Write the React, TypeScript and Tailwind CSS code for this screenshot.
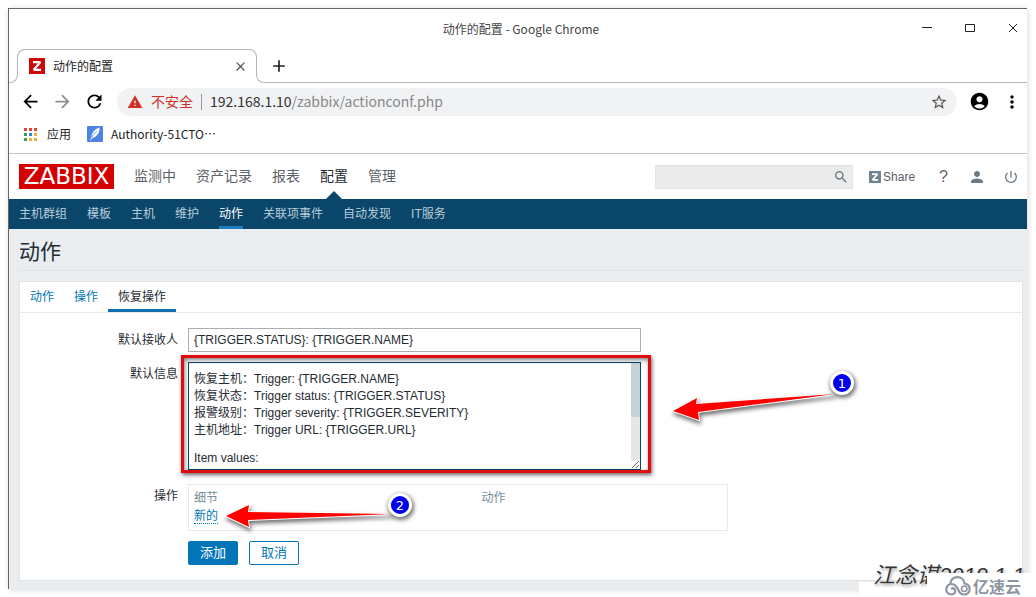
import React, { useState } from 'react';
import {
  MdArrowBack,
  MdArrowForward,
  MdRefresh,
  MdWarning,
  MdStarBorder,
  MdAccountCircle,
  MdMoreVert,
  MdClose,
  MdAdd,
  MdSearch,
  MdPerson,
  MdPowerSettingsNew,
} from 'react-icons/md';

const mainMenu = ['监测中', '资产记录', '报表', '配置', '管理'];
const subMenu = [
  '主机群组',
  '模板',
  '主机',
  '维护',
  '动作',
  '关联项事件',
  '自动发现',
  'IT服务',
];
const tabs = ['动作', '操作', '恢复操作'];

const defaultMessage = `恢复主机：Trigger: {TRIGGER.NAME}
恢复状态：Trigger status: {TRIGGER.STATUS}
报警级别：Trigger severity: {TRIGGER.SEVERITY}
主机地址：Trigger URL: {TRIGGER.URL}

Item values:





`;

const appColors = [
  'bg-[#d9453a]',
  'bg-[#d9453a]',
  'bg-[#d9453a]',
  'bg-[#2f9e58]',
  'bg-[#3b7de0]',
  'bg-[#e8b53a]',
  'bg-[#2f9e58]',
  'bg-[#e8b53a]',
  'bg-[#e8b53a]',
];

function ZIcon({ className, size }: { className: string; size: number }) {
  return (
    <svg width={size} height={size} viewBox="0 0 16 16" className={className}>
      <rect width="16" height="16" fill="currentColor" />
      <path
        d="M4 4.200h7.200L4.800 11.800H12"
        fill="none"
        stroke="#fff"
        strokeWidth="2.200"
        strokeLinejoin="bevel"
      />
    </svg>
  );
}

function TitleBar() {
  return (
    <div className="relative flex h-10 items-center justify-center pl-1.5 text-[12px] text-[#444]">
      <span>动作的配置 - Google Chrome</span>
      <div className="absolute right-2 top-3 flex gap-8 text-[#222]">
        <button aria-label="Minimize">
          <svg width="11" height="14" viewBox="0 0 11 14">
            <path d="M0 6.500h10" stroke="currentColor" />
          </svg>
        </button>
        <button aria-label="Maximize">
          <svg width="11" height="14" viewBox="0 0 11 14">
            <path d="M.5 3.500h9v7h-9z" fill="none" stroke="currentColor" />
          </svg>
        </button>
        <button aria-label="Close">
          <svg width="11" height="14" viewBox="0 0 11 14">
            <path d="M1 3l8 8M9 3l-8 8" stroke="currentColor" />
          </svg>
        </button>
      </div>
    </div>
  );
}

function TabStrip() {
  return (
    <div className="flex h-[34px]">
      <div className="h-2 w-[9px] self-end rounded-br-lg border-b border-r border-[#b4b5b7]" />
      <div className="-ml-px h-[26px] w-60 rounded-t-lg border-x border-t border-[#b4b5b7] pl-[11px] pr-2">
        <div className="flex h-8 items-center text-[12px] text-[#222]">
          <ZIcon size={16} className="mr-2 text-[#cc0a0a]" />
          <span className="flex-1">动作的配置</span>
          <button aria-label="Close tab">
            <MdClose className="h-[15px] w-[15px] text-[#555]" />
          </button>
        </div>
      </div>
      <div className="-ml-px h-2 w-2 self-end rounded-bl-lg border-b border-l border-[#b4b5b7]" />
      <div className="flex flex-1 items-center border-b border-[#b4b5b7] pl-[5px]">
        <button aria-label="New tab">
          <MdAdd className="h-5 w-5 text-[#222]" />
        </button>
      </div>
    </div>
  );
}

function Toolbar() {
  return (
    <div className="flex h-[37px] items-center pl-[11px] pr-[5px]">
      <div className="flex gap-[11px]">
        <button aria-label="Back">
          <MdArrowBack className="h-[21px] w-[21px] text-black" />
        </button>
        <button aria-label="Forward">
          <MdArrowForward className="h-[21px] w-[21px] text-[#8f8f8f]" />
        </button>
        <button aria-label="Reload">
          <MdRefresh className="h-[21px] w-[21px] text-black" />
        </button>
      </div>
      <div className="ml-3 flex h-7 flex-1 items-center rounded-full bg-[#f1f2f4] pl-2.5 pr-[9px] text-[14px]">
        <MdWarning className="h-4 w-4 text-[#d03027]" />
        <span className="ml-2 text-[#d03027]">不安全</span>
        <span className="mx-2 h-4 w-px bg-[#999]" />
        <span className="flex-1 text-[#888]">
          <span className="text-[#333]">192.168.1.10</span>/zabbix/actionconf.php
        </span>
        <button aria-label="Bookmark">
          <MdStarBorder className="h-[18px] w-[18px] text-[#555]" />
        </button>
      </div>
      <button aria-label="Profile" className="ml-3">
        <MdAccountCircle className="h-[21px] w-[21px] text-black" />
      </button>
      <button aria-label="Menu" className="ml-3">
        <MdMoreVert className="h-5 w-5 text-black" />
      </button>
    </div>
  );
}

function Bookmarks() {
  return (
    <div className="flex h-[34px] items-center border-b border-[#c4c5c7] pb-[5px] pl-[15px] text-[12px] text-[#222]">
      <a href="#apps" className="flex items-center gap-2.5">
        <span className="grid grid-cols-3 gap-[2px]">
          {appColors.map((color, i) => (
            <span key={i} className={`h-[3px] w-[3px] ${color}`} />
          ))}
        </span>
        应用
      </a>
      <a href="#blog" className="ml-4 flex items-center gap-2">
        <svg width="16" height="16" viewBox="0 0 16 16">
          <rect width="16" height="16" rx="1" fill="#4a83e4" />
          <path
            d="M12.500 1.500C7 3.500 4 7.500 4.500 12.500 9.500 11 13 7 12.500 1.500z"
            fill="#fff"
          />
          <path
            d="M3.500 14.500C5 10 7.500 7 10 5"
            stroke="#4a83e4"
            strokeWidth=".7"
            fill="none"
          />
          <path d="M3.500 14.500l1.200-3" stroke="#fff" strokeWidth=".9" />
        </svg>
        <span lang="zh-CN">Authority-51CTO…</span>
      </a>
    </div>
  );
}

function Header() {
  return (
    <header className="flex h-[45px] items-center bg-white pl-2.5 pr-2">
      <a
        href="#home"
        className="flex h-[25px] w-[95px] items-center justify-center bg-[#d40000] font-['DejaVu_Sans',sans-serif] text-[23px] leading-none text-white"
      >
        ZABBIX
      </a>
      <nav className="ml-5 flex h-full gap-5 text-[14px] text-[#5b6166]">
        {mainMenu.map((item) => (
          <a
            key={item}
            href="#menu"
            className={`relative flex items-center ${item === '配置' ? 'text-[#1f2c33]' : ''}`}
          >
            {item}
            {item === '配置' && (
              <span className="absolute bottom-0 left-1/2 -translate-x-1/2 border-x-8 border-b-8 border-x-transparent border-b-[#0a466a]" />
            )}
          </a>
        ))}
      </nav>
      <form className="relative ml-auto">
        <input
          aria-label="Search"
          className="h-6 w-[198px] border border-[#dfe4e7] bg-[#ebebeb] px-1 outline-none"
        />
        <button type="button" aria-label="Search" className="absolute right-1 top-1">
          <MdSearch className="h-4 w-4 text-[#6b7a83]" />
        </button>
      </form>
      <div className="ml-4 flex items-center text-[12px] text-[#5b6166]">
        <a href="#share" className="flex items-center gap-0.5">
          <ZIcon size={12} className="text-[#6f8592]" />
          Share
        </a>
        <a href="#help" className="ml-6 text-[16px]">
          ?
        </a>
        <button aria-label="User profile" className="ml-5">
          <MdPerson className="h-[18px] w-[18px] text-[#6b7a83]" />
        </button>
        <button aria-label="Sign out" className="ml-[17px]">
          <MdPowerSettingsNew className="h-4 w-4 text-[#6b7a83]" />
        </button>
      </div>
    </header>
  );
}

function SubNav() {
  return (
    <nav className="flex h-[30px] gap-5 bg-[#0a466a] pl-2.5 text-[12px] text-[#b9cdd9]">
      {subMenu.map((item) => (
        <a
          key={item}
          href="#submenu"
          className={`flex items-center border-b-[3px] pt-0.5 ${
            item === '动作' ? 'border-[#1f7dbf] text-white' : 'border-transparent'
          }`}
        >
          {item}
        </a>
      ))}
    </nav>
  );
}

function Marker({ n, className }: { n: number; className: string }) {
  return (
    <span
      className={`absolute flex h-6 w-6 items-center justify-center rounded-full border-[3px] border-white bg-[#0000ee] font-['DejaVu_Sans',sans-serif] text-[13px] leading-none text-white shadow-[1px_2px_4px_1px_rgba(0,0,0,0.55)] ${className}`}
    >
      {n}
    </span>
  );
}

function ActionForm() {
  const [recipient, setRecipient] = useState('{TRIGGER.STATUS}: {TRIGGER.NAME}');
  const [message, setMessage] = useState(defaultMessage);

  return (
    <form className="grid grid-cols-[158px_1fr] gap-x-2.5 pb-[15px] pt-[15px] text-[12px] text-[#1f2c33]">
      <label htmlFor="recipient" className="pt-[3px] text-right">
        默认接收人
      </label>
      <div>
        <input
          id="recipient"
          type="text"
          value={recipient}
          onChange={(e) => setRecipient(e.target.value)}
          className="block h-6 w-[453px] border border-[#acb0b3] px-[5px] outline-none"
        />
      </div>

      <label htmlFor="message" className="mt-2.5 pt-[3px] text-right">
        默认信息
      </label>
      <div className="relative mt-2.5 w-[453px]">
        <textarea
          id="message"
          value={message}
          onChange={(e) => setMessage(e.target.value)}
          className="block h-[108px] w-full resize overflow-y-scroll border border-[#0a466a] px-[5px] py-1.5 leading-[normal] outline-none [scrollbar-width:none]"
        />
        {/* scrollbar */}
        <div className="pointer-events-none absolute bottom-2.5 right-px top-px w-[9px] bg-[#e6e6e6]">
          <div className="h-[54px] bg-[#c6d1d6]" />
        </div>
        {/* highlight around the message */}
        <div className="pointer-events-none absolute -bottom-[3px] -left-[7px] -right-[10px] -top-[7px] border-[3px] border-[#e00d10] shadow-[1px_2px_4px_rgba(0,0,0,0.6),inset_1px_2px_4px_rgba(0,0,0,0.5)]" />
        <svg
          width="180"
          height="50"
          viewBox="0 0 180 50"
          className="absolute -right-[210px] top-6 drop-shadow-[1px_3px_2px_rgba(0,0,0,0.55)]"
        >
          <path
            d="M2 25L26 12l-1 6L164 8 27 26l1 8z"
            fill="#fe0000"
            stroke="#fff"
            strokeWidth="2"
            paintOrder="stroke"
          />
        </svg>
        <Marker n={1} className="-right-[213px] top-[9px]" />
      </div>

      <span className="mt-[14px] pt-[3px] text-right">操作</span>
      <div className="relative mt-[14px] w-[540px]">
        <table className="w-full border border-[#e6eaec] text-left">
          <thead className="text-[#768d99]">
            <tr>
              <th className="w-[288px] pl-[5px] pt-1 font-normal">细节</th>
              <th className="pl-[5px] pt-1 font-normal">动作</th>
            </tr>
          </thead>
          <tbody>
            <tr>
              <td colSpan={2} className="pb-[5px] pl-[5px]">
                <a href="#new" className="border-b border-dotted border-[#0275b8] text-[#0275b8]">
                  新的
                </a>
              </td>
            </tr>
          </tbody>
        </table>
        <svg
          width="180"
          height="40"
          viewBox="0 0 180 40"
          className="absolute left-9 top-3 drop-shadow-[1px_3px_2px_rgba(0,0,0,0.55)]"
        >
          <path
            d="M2 20L25 9l-1 7L168 18 24 24l1 7z"
            fill="#fe0000"
            stroke="#fff"
            strokeWidth="2"
            paintOrder="stroke"
          />
        </svg>
        <Marker n={2} className="left-[200px] top-[9px]" />
      </div>

      <div className="col-start-2 mt-2.5 flex gap-[11px] text-[13px]">
        <button
          type="button"
          className="h-6 rounded-xs border border-[#0275b8] bg-[#0275b8] px-[11px] text-white"
        >
          添加
        </button>
        <button
          type="button"
          className="h-6 rounded-xs border border-[#0275b8] bg-white px-[11px] text-[#0275b8]"
        >
          取消
        </button>
      </div>
    </form>
  );
}

function Watermark() {
  return (
    <div className="absolute bottom-0 right-0 h-10 w-[177px] overflow-hidden">
      <div className="mt-6 h-4 bg-white" />
      <span className="absolute left-[14px] top-0.5 whitespace-nowrap font-['Liberation_Sans','Noto_Sans_CJK_SC',sans-serif] text-[22px] italic leading-8 text-[#333] [text-shadow:0_0_2px_#fff,1px_2px_3px_#999]">
        江念谌2019.1.1
      </span>
      <div className="absolute bottom-0 right-0 flex h-[25px] w-[109px] items-center gap-0.5 bg-white pl-[18px] text-[16px] font-bold text-[#8d95a0]">
        <svg
          width="26"
          height="20"
          viewBox="0 0 26 20"
          fill="none"
          stroke="currentColor"
          strokeWidth="2.200"
          className="shrink-0"
        >
          <path d="M5.500 8C5.500 3.500 8.500 1.200 12.500 1.200c3.500 0 6.500 2.300 7 6.300 3 .5 5.200 2.500 5.200 5.500s-2.200 5.500-5.500 5.500c-5.200 0-5.200-4-7.200-7C10.500 9 9 8 6.500 8 3.500 8 1.300 10.200 1.300 13.300s2.200 5.200 5.200 5.200 4-2 3.500-4.500-3-2.500-3.500-.5" />
          <path
            d="M22 13c0-2-1.200-3-2.800-3S16.500 11 16.500 13s1.200 2.500 2.700 2.500S22 15 22 13z"
            strokeWidth="1.600"
          />
        </svg>
        亿速云
      </div>
    </div>
  );
}

export default function App() {
  return (
    <div className="relative bg-white pb-[9px] pl-2 pr-[9px] pt-2 font-['Noto_Sans_CJK_SC',sans-serif]">
      <div className="border-l border-t border-[#666] shadow-[1px_1px_6px_rgba(0,0,0,0.15)]">
        <TitleBar />
        <TabStrip />
        <Toolbar />
        <Bookmarks />
        <div className="bg-[#e9edf0] font-['Liberation_Sans','Noto_Sans_CJK_SC',sans-serif]">
          <Header />
          <SubNav />
          <main className="pb-2 pl-2.5 pr-1">
            <h1 className="pb-0.5 pt-[7px] text-[21px] leading-8 text-[#1f2c33]">动作</h1>
            <hr className="border-[#dce2e5]" />
            <section className="mt-2.5 border border-[#dfe4e7] bg-white">
              <div className="flex border-b border-[#e6eaec] text-[12px]">
                {tabs.map((tab) => (
                  <button
                    key={tab}
                    className={`h-[30px] border-b-[3px] px-2.5 pt-0.5 ${
                      tab === '恢复操作'
                        ? 'border-[#0f6fae] text-[#1f2c33]'
                        : 'border-transparent text-[#0275b8]'
                    }`}
                  >
                    {tab}
                  </button>
                ))}
              </div>
              <ActionForm />
            </section>
          </main>
        </div>
      </div>
      <Watermark />
    </div>
  );
}
